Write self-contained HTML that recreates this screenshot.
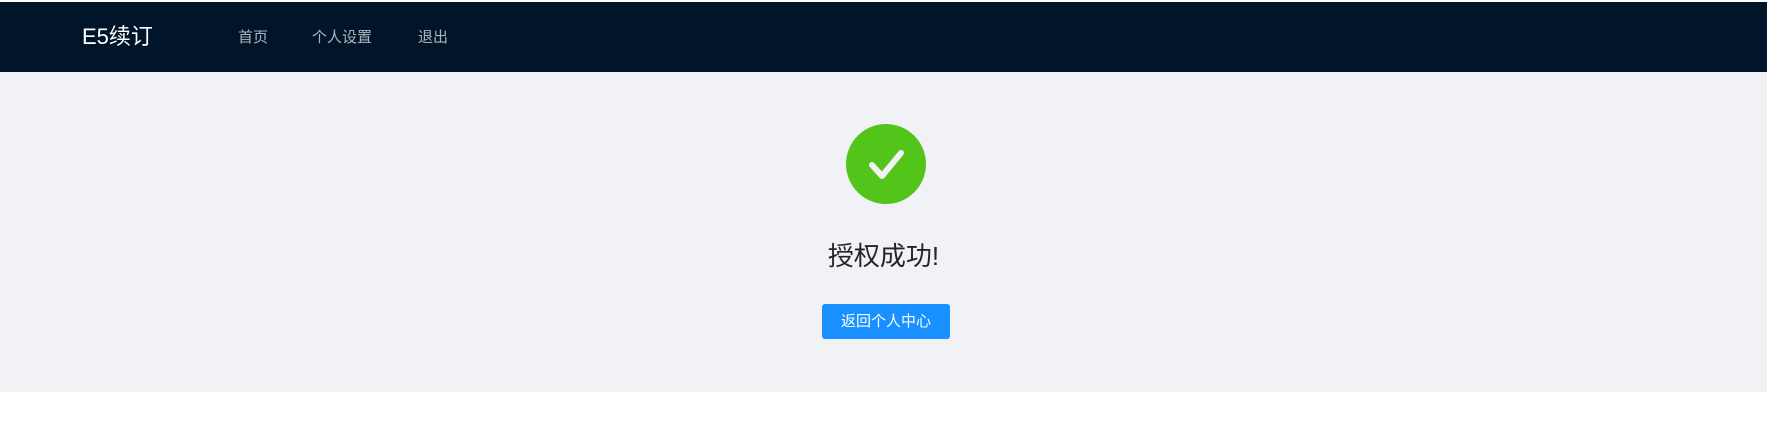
<!DOCTYPE html>
<html><head><meta charset="utf-8"><style>
body{margin:0;width:1767px;height:443px;background:#fff;font-family:"Liberation Sans","Noto Sans CJK SC",sans-serif;overflow:hidden}
.hd{position:absolute;top:2px;left:0;width:1767px;height:70px;background:#001529}
.logo{position:absolute;left:82px;top:21px;color:#fff;font-size:22px;line-height:28px}
.nav{position:absolute;top:26px;color:rgba(255,255,255,.68);font-size:15px;line-height:20px}
.main{position:absolute;top:72px;left:0;width:1767px;height:320px;background:#f0f2f5}
.c{position:absolute;left:846px;top:124px;width:80px;height:80px;border-radius:50%;background:#52c41a}
.t{position:absolute;left:0;width:1767px;top:238px;text-align:center;font-size:26px;line-height:36px;color:rgba(0,0,0,.85)}
.b{position:absolute;left:822px;top:304px;width:128px;height:35px;background:#1890ff;border-radius:3px;color:#fff;font-size:15px;line-height:35px;text-align:center}
</style></head><body>
<div class="hd"><div class="logo">E5续订</div>
<div class="nav" style="left:238px">首页</div>
<div class="nav" style="left:312px">个人设置</div>
<div class="nav" style="left:418px">退出</div></div>
<div class="main"></div>
<div class="c"><svg width="80" height="80" viewBox="0 0 80 80"><path d="M26 41 L36 52 L55 29" fill="none" stroke="#f0f2f5" stroke-width="6" stroke-linecap="round" stroke-linejoin="round"/></svg></div>
<div class="t">授权成功!</div>
<div class="b">返回个人中心</div>
</body></html>
